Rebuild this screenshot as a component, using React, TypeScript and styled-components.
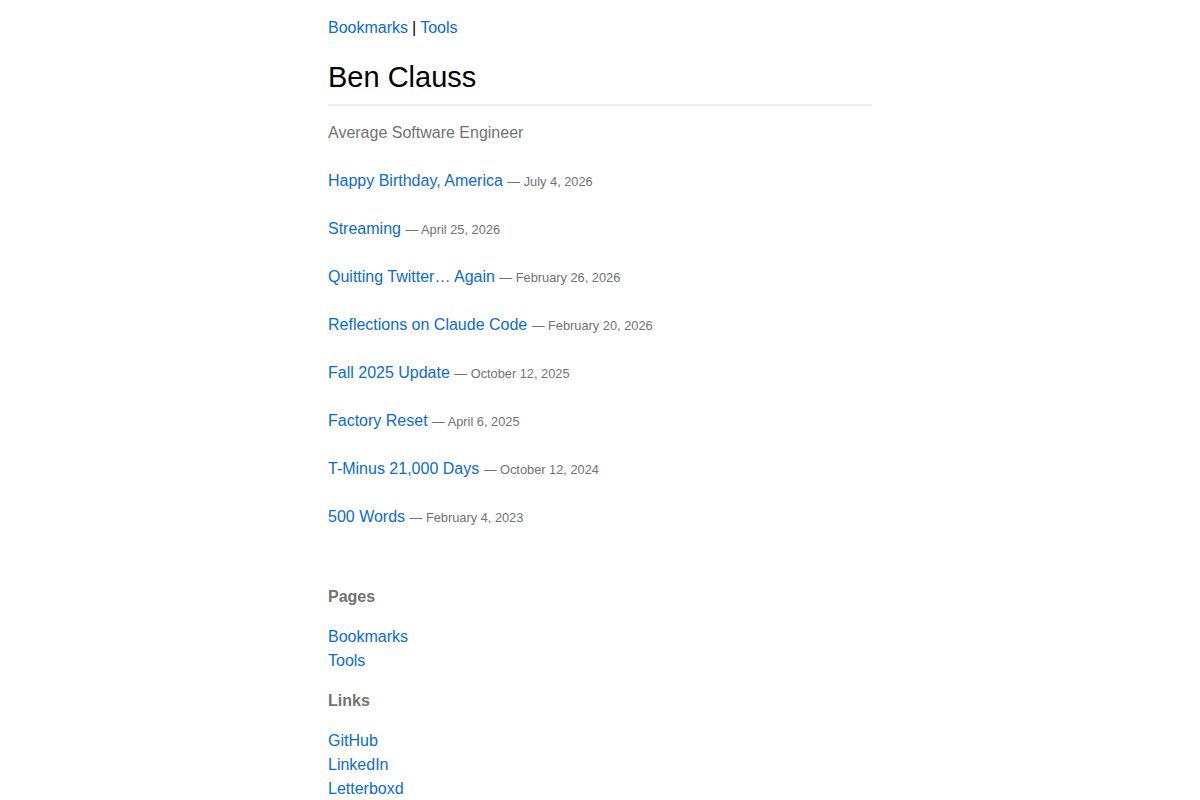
import React from "react";
import styled, { createGlobalStyle } from "styled-components";

const GlobalStyle = createGlobalStyle`
  html, body {
    margin: 0;
    padding: 0;
    background: #fff;
  }
  body {
    font-family: "Liberation Sans", Arial, sans-serif;
    font-size: 16px;
    line-height: 24px;
    color: #000;
  }
`;

const Page = styled.div`
  max-width: 544px;
  margin: 0 auto;
  padding: 16px 0 40px;
`;

const Link = styled.a`
  color: #0b6bd4;
  text-decoration: none;
`;

const Nav = styled.nav`
  display: flex;
  gap: 4px;
`;

const Header = styled.header`
  margin-top: 20px;
  padding-bottom: 9px;
  border-bottom: 2px solid #eeeeee;
`;

const Title = styled.h1`
  margin: 0;
  font-size: 29px;
  font-weight: 400;
  line-height: 35px;
`;

const Subtitle = styled.p`
  margin: 15px 0 0;
  color: #727272;
`;

const PostList = styled.ul`
  list-style: none;
  margin: 24px 0 0;
  padding: 0;
  display: flex;
  flex-direction: column;
  gap: 24px;
`;

const PostItem = styled.li`
  height: 24px;
  line-height: 24px;
`;

const PostDate = styled.span`
  font-size: 12.8px;
  line-height: 1;
  color: #727272;
`;

const SectionTitle = styled.h3<{ $first?: boolean }>`
  margin: ${({ $first }) => ($first ? "56px" : "16px")} 0 0;
  font-size: 16px;
  line-height: 24px;
  font-weight: 700;
  color: #727272;
`;

const LinkList = styled.ul`
  list-style: none;
  margin: 16px 0 0;
  padding: 0;
`;

const posts = [
  { title: "Happy Birthday, America", date: "July 4, 2026" },
  { title: "Streaming", date: "April 25, 2026" },
  { title: "Quitting Twitter… Again", date: "February 26, 2026" },
  { title: "Reflections on Claude Code", date: "February 20, 2026" },
  { title: "Fall 2025 Update", date: "October 12, 2025" },
  { title: "Factory Reset", date: "April 6, 2025" },
  { title: "T-Minus 21,000 Days", date: "October 12, 2024" },
  { title: "500 Words", date: "February 4, 2023" },
];

const sections = [
  { title: "Pages", links: ["Bookmarks", "Tools"] },
  { title: "Links", links: ["GitHub", "LinkedIn", "Letterboxd"] },
];

const App: React.FC = () => (
  <>
    <GlobalStyle />
    <Page>
      <Nav>
        <Link href="#">Bookmarks</Link>|<Link href="#">Tools</Link>
      </Nav>
      <Header>
        <Title>Ben Clauss</Title>
      </Header>
      <Subtitle>Average Software Engineer</Subtitle>
      <PostList>
        {posts.map((post) => (
          <PostItem key={post.title}>
            <Link href="#">{post.title}</Link> <PostDate>— {post.date}</PostDate>
          </PostItem>
        ))}
      </PostList>
      {sections.map((section, index) => (
        <section key={section.title}>
          <SectionTitle $first={index === 0}>{section.title}</SectionTitle>
          <LinkList>
            {section.links.map((link) => (
              <li key={link}>
                <Link href="#">{link}</Link>
              </li>
            ))}
          </LinkList>
        </section>
      ))}
    </Page>
  </>
);

export default App;
